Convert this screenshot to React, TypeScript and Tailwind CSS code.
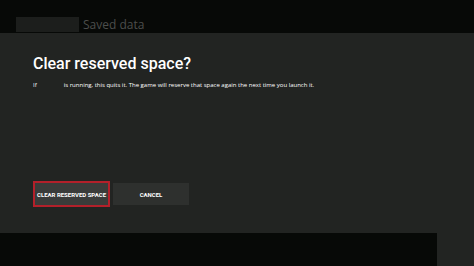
export default function App() {
  return (
    <div
      className="w-[474px] h-[266px] bg-[#070907] flex flex-col overflow-hidden"
      style={{ fontFamily: '"Open Sans", "Noto Sans", sans-serif' }}
    >
      <div className="h-[33px] flex items-end pl-[16px] pb-[1px] shrink-0">
        <div className="w-[63px] h-[15px] bg-[#1c1e1c]" />
        <div className="ml-[4px] text-[12px] leading-[15px] text-[#4c4e4c]">Saved data</div>
      </div>
      <div className="h-[200px] bg-[#222422] pl-[33px] pt-[21px] flex flex-col shrink-0">
        <div
          className="text-[16px] leading-[19px] text-white font-medium"
          style={{ fontFamily: 'Roboto, "Noto Sans", sans-serif' }}
        >
          Clear reserved space?
        </div>
        <div className="mt-[8px] text-[6px] leading-[8px] text-white flex">
          <span>If</span>
          <span className="ml-[27px]">
            is running, this quits it. The game will reserve that space again the next time you launch it.
          </span>
        </div>
        <div
          className="mt-[92px] flex items-center"
          style={{ fontFamily: 'Roboto, "Noto Sans", sans-serif' }}
        >
          <div className="w-[77px] h-[26px] border-2 border-[#b3202a] bg-[#3a3c3a] flex items-center justify-center text-[6px] font-bold text-white">
            CLEAR RESERVED SPACE
          </div>
          <div className="ml-[3px] w-[76px] h-[22px] bg-[#2e302e] flex items-center justify-center text-[6px] font-bold text-white">
            CANCEL
          </div>
        </div>
      </div>
      <div className="flex-1 flex">
        <div className="w-[437px] bg-[#070907]" />
        <div className="flex-1 bg-[#222422]" />
      </div>
    </div>
  );
}
